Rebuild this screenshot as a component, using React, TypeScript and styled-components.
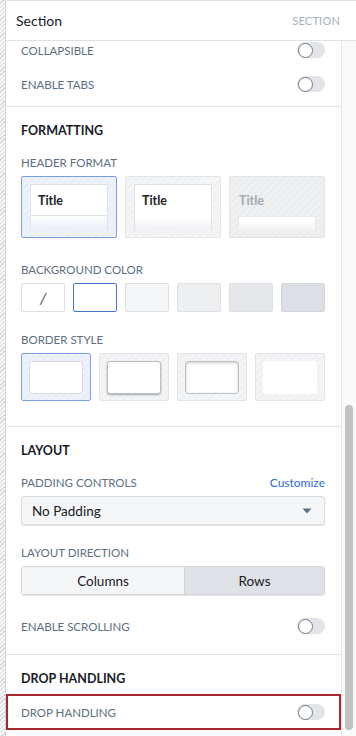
import React from 'react';
import styled, { createGlobalStyle, css } from 'styled-components';

const GlobalStyle = createGlobalStyle`
  html, body { margin: 0; padding: 0; background: #fff; }
  body { font-family: Lato, "Open Sans", "Liberation Sans", sans-serif; color: #182026; }
  * { box-sizing: border-box; }
`;

const Frame = styled.div`
  display: flex;
  width: 356px;
  height: 736px;
  overflow: hidden;
  background: #fff;
`;

const Gutter = styled.div`
  flex: none;
  width: 6px;
  border-right: 1px solid #d3d6da;
  background: repeating-linear-gradient(135deg, #f6f6f6 0 2px, #d9d9d9 2px 3px);
`;

const Panel = styled.div`
  flex: 1;
  display: flex;
  flex-direction: column;
  min-width: 0;
  border-top: 1px solid #dfe2e5;
`;

const Header = styled.div`
  flex: none;
  height: 40px;
  display: flex;
  align-items: center;
  justify-content: space-between;
  padding: 0 16px 1px 10px;
  border-bottom: 1px solid #dfe2e5;
`;

const HeaderTitle = styled.span`
  font-size: 14px;
  color: #182026;
`;

const HeaderKind = styled.span`
  font-size: 11px;
  letter-spacing: 0.2px;
  color: #a7b0b9;
  text-transform: uppercase;
`;

const Body = styled.div`
  flex: 1;
  display: flex;
  min-height: 0;
`;

const Scroller = styled.div`
  flex: 1;
  min-width: 0;
  overflow: hidden;
`;

const Content = styled.div`
  margin-top: -8px;
`;

const ScrollTrack = styled.div`
  flex: none;
  width: 15px;
  display: flex;
  flex-direction: column;
  padding: 364px 3px 6px 3px;
  border-left: 1px solid #e4e6e9;
  background: #fafafa;
`;

const ScrollThumb = styled.div`
  flex: 1;
  width: 8px;
  border-radius: 4px;
  background: #c2c2c2;
`;

const Section = styled.section<{ $pt: number; $pb: number; $last?: boolean }>`
  display: flex;
  flex-direction: column;
  padding: ${(p) => p.$pt}px 16px ${(p) => p.$pb}px 15px;
  border-bottom: ${(p) => (p.$last ? 'none' : '1px solid #e1e4e8')};
`;

const Heading = styled.h3<{ $mb?: number }>`
  margin: 0 0 ${(p) => p.$mb ?? 16}px;
  font-size: 12.5px;
  line-height: 16px;
  font-weight: 700;
  color: #182026;
  text-transform: uppercase;
`;

const Field = styled.div<{ $mt?: number }>`
  display: flex;
  flex-direction: column;
  margin-top: ${(p) => p.$mt ?? 0}px;
`;

const LabelRow = styled.div`
  display: flex;
  align-items: center;
  justify-content: space-between;
  height: 15px;
  margin-bottom: 6px;
`;

const Label = styled.span`
  font-size: 11.5px;
  color: #5c7080;
  text-transform: uppercase;
`;

const LinkText = styled.span`
  font-size: 12px;
  color: #2f6bd4;
`;

const Row = styled.div<{ $mt?: number }>`
  display: flex;
  align-items: center;
  justify-content: space-between;
  height: 34px;
  margin-top: ${(p) => p.$mt ?? 0}px;
`;

const HighlightRow = styled.div`
  display: flex;
  align-items: center;
  justify-content: space-between;
  height: 36px;
  margin: 7px -16px 0 -15px;
  padding: 0 14px 0 13px;
  border: 2px solid #a8262f;
`;

const Track = styled.div`
  display: flex;
  align-items: center;
  width: 28px;
  height: 16px;
  padding: 0 1px;
  border-radius: 8px;
  background: #e2e4e7;
`;

const Knob = styled.div`
  width: 15px;
  height: 15px;
  border-radius: 50%;
  background: #fff;
  border: 1px solid #6f7a85;
`;

const Toggle = () => (
  <Track>
    <Knob />
  </Track>
);

const hatchGray = css`
  background: repeating-linear-gradient(135deg, #f4f5f6 0 3px, #eff0f2 3px 5px);
`;
const hatchBlue = css`
  background: repeating-linear-gradient(135deg, #eef2fa 0 3px, #e8edf8 3px 5px);
`;
const hatchDark = css`
  background: repeating-linear-gradient(135deg, #eff0f2 0 3px, #e9ebed 3px 5px);
`;

const TileRow = styled.div<{ $cols: number }>`
  display: grid;
  grid-template-columns: repeat(${(p) => p.$cols}, 1fr);
  gap: 8px;
`;

const Tile = styled.div<{ $selected?: boolean; $tone?: 'dark'; $h: number; $pad: string }>`
  height: ${(p) => p.$h}px;
  display: flex;
  flex-direction: column;
  padding: ${(p) => p.$pad};
  border-radius: 2px;
  border: 1px solid ${(p) => (p.$selected ? '#7c9fe3' : '#e2e4e7')};
  ${(p) => (p.$selected ? hatchBlue : p.$tone === 'dark' ? hatchDark : hatchGray)}
`;

const PreviewCard = styled.div`
  flex: 1;
  display: flex;
  flex-direction: column;
  border: 1px solid #dfe2e6;
  border-bottom: none;
  background: #fff;
`;

const PreviewHead = styled.div<{ $divided?: boolean }>`
  height: 31px;
  flex: none;
  display: flex;
  align-items: center;
  padding: 0 7px;
  font-size: 12.5px;
  font-weight: 700;
  color: #1c2127;
  border-bottom: ${(p) => (p.$divided ? '1px solid #e0e3e7' : 'none')};
`;

const PreviewBody = styled.div<{ $fade: string }>`
  flex: 1;
  background: linear-gradient(180deg, #ffffff 0%, ${(p) => p.$fade} 100%);
`;

const MutedTitle = styled.div`
  height: 32px;
  flex: none;
  display: flex;
  align-items: center;
  padding: 0 1px;
  font-size: 12.5px;
  font-weight: 700;
  color: #a3abb3;
`;

const MutedBox = styled.div`
  flex: 1;
  border: 1px solid #e6e8eb;
  border-bottom: none;
  background: linear-gradient(180deg, #ffffff 30%, #f1f2f4 100%);
`;

const Swatch = styled.div<{ $bg: string; $selected?: boolean; $border?: string }>`
  height: 29px;
  display: flex;
  align-items: center;
  justify-content: center;
  border-radius: 2px;
  background: ${(p) => p.$bg};
  border: 1px solid ${(p) => (p.$selected ? '#4a74cf' : p.$border ?? '#dcdfe3')};
  font-size: 16px;
  font-style: italic;
  color: #4a5663;
`;

const BorderPreview = styled.div<{ $kind: 'flat' | 'raised' | 'sunken' | 'none' }>`
  flex: 1;
  background: #fff;
  border-radius: 3px;
  ${(p) =>
    p.$kind === 'flat'
      ? css`border: 1px solid #d6d9dd;`
      : p.$kind === 'raised'
      ? css`border: 1px solid #b9bec4; box-shadow: 0 1px 2px rgba(16, 22, 26, 0.35);`
      : p.$kind === 'sunken'
      ? css`border: 1px solid #bfc3c8; box-shadow: inset 0 1px 3px rgba(16, 22, 26, 0.22);`
      : css`border: 1px solid transparent;`}
`;

const Select = styled.div`
  height: 29px;
  display: flex;
  align-items: center;
  justify-content: space-between;
  padding: 0 12px 0 10px;
  border-radius: 3px;
  border: 1px solid #d9dce0;
  background: #f5f6f8;
  box-shadow: 0 1px 1px rgba(16, 22, 26, 0.12);
  font-size: 13.5px;
  color: #182026;
`;

const Segmented = styled.div`
  display: grid;
  grid-template-columns: 162px 1fr;
  height: 29px;
  border-radius: 3px;
  border: 1px solid #d3d7db;
  box-shadow: 0 1px 1px rgba(16, 22, 26, 0.12);
  overflow: hidden;
`;

const Segment = styled.div<{ $active?: boolean }>`
  display: flex;
  align-items: center;
  justify-content: center;
  font-size: 13.5px;
  color: #182026;
  background: ${(p) => (p.$active ? '#dee1e5' : '#f5f6f8')};
  border-left: ${(p) => (p.$active ? '1px solid #cfd3d7' : 'none')};
`;

const Caret = () => (
  <svg width="10" height="6" viewBox="0 0 10 6" aria-hidden>
    <path d="M0.5 0.5 L9.5 0.5 L5 5.5 Z" fill="#5c7080" />
  </svg>
);

export default function App() {
  return (
    <>
      <GlobalStyle />
      <Frame>
        <Gutter />
        <Panel>
          <Header>
            <HeaderTitle>Section</HeaderTitle>
            <HeaderKind>Section</HeaderKind>
          </Header>
          <Body>
            <Scroller>
              <Content>
                <Section $pt={0} $pb={5}>
                  <Row>
                    <Label>Collapsible</Label>
                    <Toggle />
                  </Row>
                  <Row>
                    <Label>Enable tabs</Label>
                    <Toggle />
                  </Row>
                </Section>

                <Section $pt={16} $pb={25}>
                  <Heading>Formatting</Heading>
                  <Field>
                    <LabelRow>
                      <Label>Header format</Label>
                    </LabelRow>
                    <TileRow $cols={3}>
                      <Tile $selected $h={62} $pad="7px 8px 7px 8px">
                        <PreviewCard>
                          <PreviewHead $divided>Title</PreviewHead>
                          <PreviewBody $fade="#e9eef8" />
                        </PreviewCard>
                      </Tile>
                      <Tile $h={62} $pad="7px 8px 7px 8px">
                        <PreviewCard>
                          <PreviewHead>Title</PreviewHead>
                          <PreviewBody $fade="#f0f1f3" />
                        </PreviewCard>
                      </Tile>
                      <Tile $tone="dark" $h={62} $pad="7px 8px 7px 8px">
                        <MutedTitle>Title</MutedTitle>
                        <MutedBox />
                      </Tile>
                    </TileRow>
                  </Field>

                  <Field $mt={24}>
                    <LabelRow>
                      <Label>Background color</Label>
                    </LabelRow>
                    <TileRow $cols={6}>
                      <Swatch $bg="#ffffff">/</Swatch>
                      <Swatch $bg="#ffffff" $selected />
                      <Swatch $bg="#f5f6f7" />
                      <Swatch $bg="#edeff1" />
                      <Swatch $bg="#e5e7ea" />
                      <Swatch $bg="#dcdfe3" $border="#d2d5d9" />
                    </TileRow>
                  </Field>

                  <Field $mt={20}>
                    <LabelRow>
                      <Label>Border style</Label>
                    </LabelRow>
                    <TileRow $cols={4}>
                      <Tile $selected $h={48} $pad="7px 7px 6px 7px">
                        <BorderPreview $kind="flat" />
                      </Tile>
                      <Tile $h={48} $pad="7px 7px 6px 7px">
                        <BorderPreview $kind="raised" />
                      </Tile>
                      <Tile $h={48} $pad="7px 7px 6px 7px">
                        <BorderPreview $kind="sunken" />
                      </Tile>
                      <Tile $h={48} $pad="7px 7px 6px 7px">
                        <BorderPreview $kind="none" />
                      </Tile>
                    </TileRow>
                  </Field>
                </Section>

                <Section $pt={16} $pb={11}>
                  <Heading>Layout</Heading>
                  <Field>
                    <LabelRow>
                      <Label>Padding controls</Label>
                      <LinkText>Customize</LinkText>
                    </LabelRow>
                    <Select>
                      <span>No Padding</span>
                      <Caret />
                    </Select>
                  </Field>
                  <Field $mt={20}>
                    <LabelRow>
                      <Label>Layout direction</Label>
                    </LabelRow>
                    <Segmented>
                      <Segment>Columns</Segment>
                      <Segment $active>Rows</Segment>
                    </Segmented>
                  </Field>
                  <Row $mt={14}>
                    <Label>Enable scrolling</Label>
                    <Toggle />
                  </Row>
                </Section>

                <Section $pt={16} $pb={0} $last>
                  <Heading $mb={0}>Drop handling</Heading>
                  <HighlightRow>
                    <Label>Drop handling</Label>
                    <Toggle />
                  </HighlightRow>
                </Section>
              </Content>
            </Scroller>
            <ScrollTrack>
              <ScrollThumb />
            </ScrollTrack>
          </Body>
        </Panel>
      </Frame>
    </>
  );
}
